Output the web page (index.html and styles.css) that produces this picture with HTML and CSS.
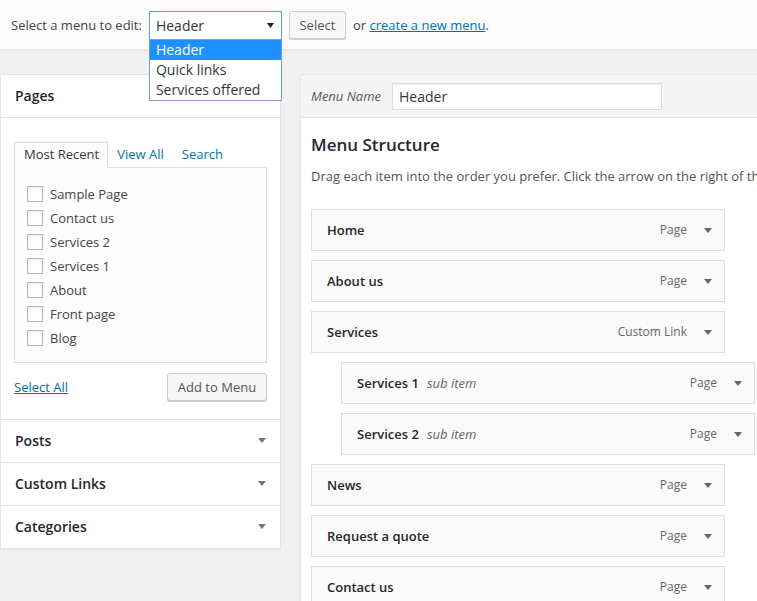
FILE: index.html
```html
<!DOCTYPE html>
<html>
<head>
<meta charset="utf-8">
<link rel="stylesheet" href="styles.css">
</head>
<body>
<div class="manage">
  <span class="manage-label">Select a menu to edit:</span>
  <div class="select-wrap">
    <div class="select-box"><span>Header</span><svg class="select-arrow" width="7" height="5" viewBox="0 0 7 5"><path d="M0 0h7L3.5 5z"/></svg></div>
    <ul class="select-list">
      <li class="is-hl">Header</li>
      <li>Quick links</li>
      <li>Services offered</li>
    </ul>
  </div>
  <button class="btn btn-select">Select</button>
  <span class="manage-or">or <a href="#">create a new menu</a>.</span>
</div>

<div class="columns">
  <div class="side">
    <div class="acc acc-open">
      <h3 class="acc-title">Pages</h3>
      <div class="acc-body">
        <ul class="tabs">
          <li class="tab tab-active">Most Recent</li>
          <li class="tab">View All</li>
          <li class="tab">Search</li>
        </ul>
        <div class="tabs-panel">
          <div class="row"><span class="cb"></span>Sample Page</div>
          <div class="row"><span class="cb"></span>Contact us</div>
          <div class="row"><span class="cb"></span>Services 2</div>
          <div class="row"><span class="cb"></span>Services 1</div>
          <div class="row"><span class="cb"></span>About</div>
          <div class="row"><span class="cb"></span>Front page</div>
          <div class="row"><span class="cb"></span>Blog</div>
        </div>
        <div class="acc-actions">
          <a href="#" class="select-all">Select All</a>
          <button class="btn btn-add">Add to Menu</button>
        </div>
      </div>
    </div>
    <div class="acc"><h3 class="acc-title">Posts<svg class="acc-arrow" width="8" height="5" viewBox="0 0 8 5"><path d="M0 0h8L4 5z"/></svg></h3></div>
    <div class="acc"><h3 class="acc-title">Custom Links<svg class="acc-arrow" width="8" height="5" viewBox="0 0 8 5"><path d="M0 0h8L4 5z"/></svg></h3></div>
    <div class="acc acc-last"><h3 class="acc-title">Categories<svg class="acc-arrow" width="8" height="5" viewBox="0 0 8 5"><path d="M0 0h8L4 5z"/></svg></h3></div>
  </div>

  <div class="main">
    <div class="main-header">
      <label class="menu-name-label">Menu Name</label>
      <div class="menu-name-input">Header</div>
    </div>
    <div class="main-body">
      <h3 class="structure-title">Menu Structure</h3>
      <p class="structure-desc">Drag each item into the order you prefer. Click the arrow on the right of the item to reveal additional configuration options.</p>
      <ul class="menu-items">
        <li class="item"><span class="item-title">Home</span><span class="item-controls"><span class="item-type">Page</span><svg class="item-arrow" width="8" height="5" viewBox="0 0 8 5"><path d="M0 0h8L4 5z"/></svg></span></li>
        <li class="item"><span class="item-title">About us</span><span class="item-controls"><span class="item-type">Page</span><svg class="item-arrow" width="8" height="5" viewBox="0 0 8 5"><path d="M0 0h8L4 5z"/></svg></span></li>
        <li class="item"><span class="item-title">Services</span><span class="item-controls"><span class="item-type">Custom Link</span><svg class="item-arrow" width="8" height="5" viewBox="0 0 8 5"><path d="M0 0h8L4 5z"/></svg></span></li>
        <li class="item item-sub"><span class="item-title">Services 1<span class="sub-label">sub item</span></span><span class="item-controls"><span class="item-type">Page</span><svg class="item-arrow" width="8" height="5" viewBox="0 0 8 5"><path d="M0 0h8L4 5z"/></svg></span></li>
        <li class="item item-sub"><span class="item-title">Services 2<span class="sub-label">sub item</span></span><span class="item-controls"><span class="item-type">Page</span><svg class="item-arrow" width="8" height="5" viewBox="0 0 8 5"><path d="M0 0h8L4 5z"/></svg></span></li>
        <li class="item"><span class="item-title">News</span><span class="item-controls"><span class="item-type">Page</span><svg class="item-arrow" width="8" height="5" viewBox="0 0 8 5"><path d="M0 0h8L4 5z"/></svg></span></li>
        <li class="item"><span class="item-title">Request a quote</span><span class="item-controls"><span class="item-type">Page</span><svg class="item-arrow" width="8" height="5" viewBox="0 0 8 5"><path d="M0 0h8L4 5z"/></svg></span></li>
        <li class="item"><span class="item-title">Contact us</span><span class="item-controls"><span class="item-type">Page</span><svg class="item-arrow" width="8" height="5" viewBox="0 0 8 5"><path d="M0 0h8L4 5z"/></svg></span></li>
      </ul>
    </div>
  </div>
</div>
</body>
</html>
```

FILE: styles.css
```css
html, body {
  margin: 0;
  padding: 0;
  overflow: hidden;
  height: 100%;
}
body {
  background: #f1f1f1;
  font-family: "Open Sans", "Liberation Sans", sans-serif;
  font-size: 13px;
  color: #444;
  line-height: 20px;
}
ul { list-style: none; margin: 0; padding: 0; }
a { color: #0073aa; text-decoration: underline; }

/* top bar */
.manage {
  height: 50px;
  box-sizing: border-box;
  background: #fbfbfb;
  border-bottom: 1px solid #e8e8e8;
  box-shadow: 0 1px 1px rgba(0,0,0,.04);
  display: flex;
  align-items: flex-start;
  padding: 11px 0 0 11px;
  position: relative;
  z-index: 2;
  line-height: 29px;
}
.manage-label { margin-right: 7px; }
.select-wrap {
  position: relative;
  width: 133px;
  height: 29px;
}
.select-box {
  box-sizing: border-box;
  height: 29px;
  width: 133px;
  border: 1px solid #5b9dd9;
  background: #fff;
  display: flex;
  align-items: center;
  justify-content: space-between;
  padding: 0 7px 0 6px;
  font-size: 14px;
  color: #32373c;
}
.select-arrow { fill: #222; }
.select-list {
  position: absolute;
  top: 28px;
  left: 0;
  width: 133px;
  box-sizing: border-box;
  border: 1px solid #7a9cd3;
  background: #fff;
  font-size: 14px;
  color: #32373c;
}
.select-list li {
  height: 20px;
  line-height: 20px;
  padding-left: 6px;
}
.select-list .is-hl { background: #1e90ff; color: #fff; }

.btn {
  font-family: inherit;
  font-size: 13px;
  color: #555;
  background: #f7f7f7;
  border: 1px solid #ccc;
  border-radius: 3px;
  box-shadow: 0 1px 0 #ccc;
  height: 28px;
  line-height: 26px;
  padding: 0 9px;
  margin: 0;
}
.btn-select { margin-left: 7px; width: 57px; padding: 0; }
.manage-or { margin-left: 7px; line-height: 28px; }

/* columns */
.columns {
  display: flex;
  align-items: flex-start;
  margin-top: 24px;
}
.side {
  width: 281px;
  flex-shrink: 0;
  box-sizing: border-box;
  background: #fff;
  border: 1px solid #e5e5e5;
  box-shadow: 0 1px 1px rgba(0,0,0,.04);
}
.acc { border-bottom: 1px solid #dfdfdf; }
.acc-last { border-bottom: none; }
.acc-title {
  margin: 0;
  height: 42px;
  box-sizing: border-box;
  padding: 10px 14px 11px 14px;
  line-height: 21px;
  font-size: 14px;
  font-weight: 600;
  color: #23282d;
  display: flex;
  align-items: center;
  justify-content: space-between;
}
.acc-open .acc-title { border-bottom: 1px solid #dfdfdf; height: 43px; }
.acc-arrow { fill: #777; margin-right: 0; }
.acc-body { padding: 24px 13px 18px 13px; }

.tabs {
  display: flex;
  height: 25px;
  position: relative;
  z-index: 1;
}
.tab {
  box-sizing: border-box;
  height: 26px;
  line-height: 23px;
  padding: 0 8px;
  border: 1px solid transparent;
  color: #0073aa;
}
.tab-active {
  padding: 0 8px 0 9px;
  border-color: #ddd;
  border-bottom-color: #fdfdfd;
  background: #fdfdfd;
  color: #32373c;
}
.tabs-panel {
  box-sizing: border-box;
  height: 196px;
  border: 1px solid #ddd;
  background: #fdfdfd;
  padding: 14px 12px 12px 12px;
}
.row {
  height: 24px;
  display: flex;
  align-items: center;
  color: #444;
}
.cb {
  width: 16px;
  height: 16px;
  box-sizing: border-box;
  border: 1px solid #b4b9be;
  background: #fff;
  box-shadow: inset 0 1px 2px rgba(0,0,0,.1);
  margin-right: 7px;
}
.acc-actions {
  margin-top: 10px;
  display: flex;
  justify-content: space-between;
  align-items: center;
}
.btn-add { width: 100px; padding: 0; }

/* main */
.main {
  margin-left: 19px;
  width: 500px;
  flex-shrink: 0;
  box-sizing: border-box;
  background: #fff;
  border: 1px solid #e5e5e5;
  box-shadow: 0 1px 1px rgba(0,0,0,.04);
  min-height: 600px;
}
.main-header {
  height: 43px;
  box-sizing: border-box;
  background: #f5f5f5;
  border-bottom: 1px solid #dfdfdf;
  display: flex;
  align-items: center;
  padding-left: 10px;
}
.menu-name-label {
  font-style: italic;
  color: #555;
  width: 81px;
}
.menu-name-input {
  box-sizing: border-box;
  width: 270px;
  height: 27px;
  border: 1px solid #ddd;
  background: #fff;
  box-shadow: inset 0 1px 2px rgba(0,0,0,.07);
  padding: 0 6px;
  font-size: 14px;
  line-height: 25px;
  color: #32373c;
}
.main-body { padding: 0 10px; }
.structure-title {
  margin: 15px 0 0 0;
  font-size: 17px;
  line-height: 24px;
  font-weight: 600;
  color: #23282d;
}
.structure-desc {
  margin: 9px 0 0 0;
  line-height: 20px;
  color: #555;
  white-space: nowrap;
}
.menu-items { margin-top: 23px; }
.item {
  width: 414px;
  height: 42px;
  box-sizing: border-box;
  border: 1px solid #dfdfdf;
  background: #fafafa;
  padding: 10px 12px 10px 15px;
  margin-bottom: 9px;
  display: flex;
  align-items: center;
  justify-content: space-between;
}
.item-sub { margin-left: 30px; }
.item-title {
  font-weight: 600;
  color: #23282d;
}
.sub-label {
  font-weight: 400;
  font-style: italic;
  color: #666;
  margin-left: 8px;
}
.item-controls {
  display: flex;
  align-items: center;
}
.item-type { color: #666; font-size: 12px; }
.item-arrow { fill: #666; margin-left: 17px; }
```
